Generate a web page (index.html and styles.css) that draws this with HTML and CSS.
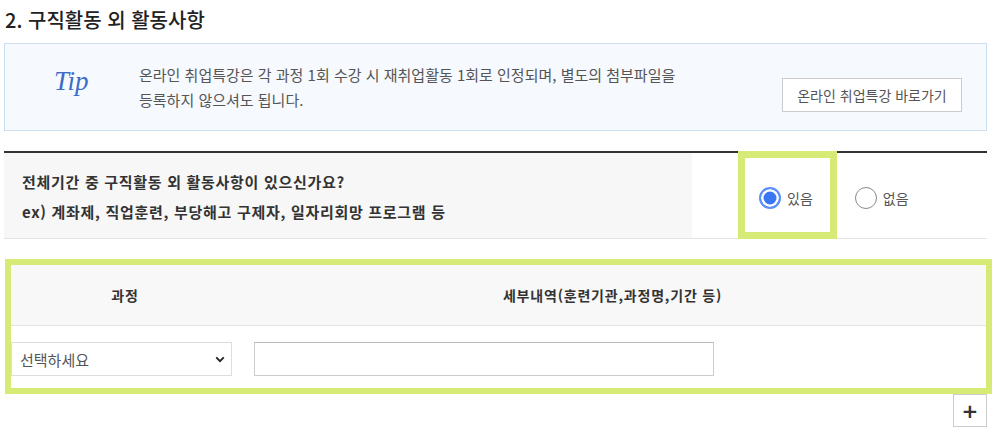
FILE: index.html
```html
<!DOCTYPE html>
<html lang="ko">
<head>
  <meta charset="UTF-8" />
  <meta name="viewport" content="width=device-width, initial-scale=1.0"/>
  <title>구직활동 외 활동사항</title>
  <link rel="stylesheet" href="styles.css">
</head>
<body>
  <div id="page">
    <h2 class="sec-title">2. 구직활동 외 활동사항</h2>

    <div class="tip-box">
      <div class="tip-label">Tip</div>
      <p class="tip-text">온라인 취업특강은 각 과정 1회 수강 시 재취업활동 1회로 인정되며, 별도의 첨부파일을<br>등록하지 않으셔도 됩니다.</p>
      <button class="btn-link">온라인 취업특강 바로가기</button>
    </div>

    <div class="qa-row">
      <div class="qa-question">
        <p>전체기간 중 구직활동 외 활동사항이 있으신가요?</p>
        <p>ex) 계좌제, 직업훈련, 부당해고 구제자, 일자리회망 프로그램 등</p>
      </div>
      <div class="qa-answer">
        <label class="radio">
          <input type="radio" name="has" checked>
          <span class="radio-mark"></span>있음
        </label>
        <label class="radio">
          <input type="radio" name="has">
          <span class="radio-mark"></span>없음
        </label>
      </div>
      <div class="mark-box"></div>
    </div>

    <div class="act-table">
      <div class="act-head">
        <div>과정</div>
        <div>세부내역(훈련기관,과정명,기간 등)</div>
      </div>
      <div class="act-body">
        <div class="select-wrap">
          <select>
            <option>선택하세요</option>
          </select>
          <svg viewBox="0 0 12 8"><path d="M1.5 1.5 6 6l4.5-4.5" fill="none" stroke="#222" stroke-width="2.2"/></svg>
        </div>
        <div class="detail-cell">
          <input type="text">
        </div>
      </div>
    </div>

    <div class="add-row">
      <button class="btn-add" title="추가">+</button>
    </div>
  </div>
</body>
</html>
```

FILE: styles.css
```css
:root {
  --mark-green: #d6ea76;
  --line: #e3e3e3;
  --text: #333;
}
* {
  box-sizing: border-box;
  margin: 0;
  padding: 0;
}
body {
  font-family: 'Noto Sans CJK KR', 'Noto Sans', sans-serif;
  color: var(--text);
  background: #fff;
}
#page {
  width: 983px;
  margin-left: 4px;
}
.sec-title {
  padding-top: 5px;
  padding-left: 1px;
  font-size: 20px;
  font-weight: 500;
  line-height: 30px;
  color: #222;
}
.tip-box {
  margin-top: 8px;
  display: flex;
  padding: 18px 24px 18px 0;
  background: #f6f9fd;
  border: 1px solid #cbdfee;
}
.tip-label {
  width: 85px;
  margin-left: 49px;
  font-family: 'Liberation Serif', serif;
  font-style: italic;
  font-size: 27px;
  line-height: 38px;
  color: #3d6bc8;
}
.tip-text {
  flex: 1;
  font-size: 15px;
  line-height: 25px;
  color: #555;
}
.btn-link {
  align-self: flex-end;
  height: 34px;
  width: 180px;
  font-family: inherit;
  font-size: 14px;
  color: #555;
  background: #fff;
  border: 1px solid #ccc;
}
.qa-row {
  position: relative;
  display: flex;
  margin-top: 20px;
  border-top: 2px solid #333;
  border-bottom: 1px solid var(--line);
}
.qa-question {
  width: 688px;
  padding: 14px 18px 11px;
  background: #f7f7f7;
  font-size: 15px;
  font-weight: 700;
  letter-spacing: 0.7px;
  line-height: 30px;
}
.qa-answer {
  flex: 1;
  display: flex;
  align-items: center;
  gap: 42px;
  padding: 5px 0 0 67px;
}
.radio {
  display: flex;
  align-items: center;
  gap: 6px;
  font-size: 14px;
  color: #555;
}
.radio input {
  display: none;
}
.radio-mark {
  width: 22px;
  height: 22px;
  border-radius: 50%;
  border: 1.5px solid #8a8a8a;
  background: #fff;
}
.radio input:checked + .radio-mark {
  border: 2px solid #5b91f8;
  background: #3a77f5;
  box-shadow: inset 0 0 0 2.5px #fff;
}
.mark-box {
  position: absolute;
  left: 734px;
  top: -2px;
  width: 99px;
  height: 88px;
  border: 7px solid var(--mark-green);
  pointer-events: none;
}
.act-table {
  width: 987px;
  margin-top: 20px;
  margin-left: 1px;
  border: 6px solid var(--mark-green);
}
.act-head {
  display: grid;
  grid-template-columns: 228px 1fr;
  height: 61px;
  align-items: center;
  background: #f8f8f8;
  border-bottom: 1px solid var(--line);
  font-size: 14px;
  font-weight: 700;
  letter-spacing: 0.8px;
  text-align: center;
}
.act-body {
  display: grid;
  grid-template-columns: 243px 1fr;
  height: 62px;
  padding-top: 16px;
  background: #fff;
}
.select-wrap {
  position: relative;
  width: 221px;
  height: 34px;
}
.select-wrap select {
  width: 100%;
  height: 100%;
  appearance: none;
  padding-left: 8px;
  font-family: inherit;
  font-size: 15px;
  color: #555;
  background: #fff;
  border: 1px solid #ddd;
  border-radius: 0;
}
.select-wrap svg {
  position: absolute;
  right: 7px;
  top: 14px;
  width: 10px;
  height: 7px;
}
.detail-cell input {
  width: 460px;
  height: 34px;
  border: 1px solid #ccc;
  border-top-color: #bbb;
}
.add-row {
  display: flex;
  justify-content: flex-end;
}
.btn-add {
  width: 34px;
  height: 33px;
  background: #fff;
  border: 1px solid #ccc;
  font-family: 'DejaVu Sans', sans-serif;
  font-size: 20px;
  font-weight: 700;
  color: #333;
  line-height: 1;
}
```
